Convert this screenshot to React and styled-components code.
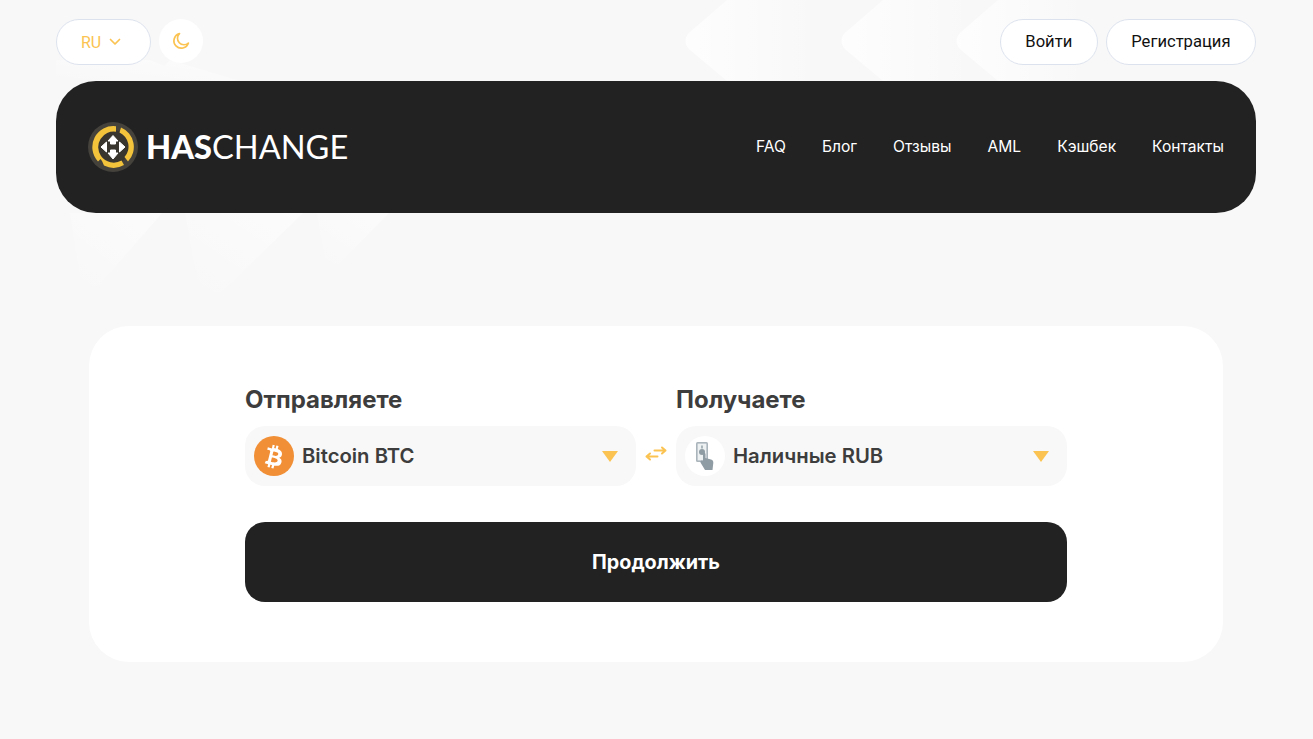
import React from "react";
import styled, { createGlobalStyle } from "styled-components";

const Global = createGlobalStyle`
  html, body { margin: 0; padding: 0; background: #f8f8f8; }
  body { font-family: Inter, Roboto, "Liberation Sans", sans-serif; overflow: hidden; }
  * { box-sizing: border-box; }
`;
const Page = styled.div`
  position: relative;
  height: 739px;
  padding: 19px 57px 0 56px;
  overflow: hidden;
`;
const Backdrop = styled.svg`
  position: absolute;
  left: 0;
  top: 0;
  width: 1313px;
  height: 320px;
  pointer-events: none;
`;
const Content = styled.div`
  position: relative;
`;
const TopBar = styled.div`
  display: flex;
  justify-content: space-between;
  height: 46px;
`;
const Group = styled.div`
  display: flex;
  gap: 8px;
`;
const PillButton = styled.button`
  height: 46px;
  padding: 0 24.5px 2px;
  border: 1px solid #dde3ee;
  border-radius: 23px;
  background: #fff;
  color: ${(p) => p.$color || "#111"};
  font: 400 16.6px Roboto, "Liberation Sans", sans-serif;
  display: flex;
  align-items: center;
  gap: 8px;
`;
const LangButton = styled(PillButton)`
  width: 95px;
  padding: 0 0 0 24px;
  font-size: 16px;
`;
const RoundButton = styled.button`
  width: 44px;
  height: 44px;
  border: 0;
  padding: 0;
  border-radius: 50%;
  background: #fff;
  display: flex;
  align-items: center;
  justify-content: center;
`;
const Header = styled.header`
  margin-top: 16px;
  height: 132px;
  background: #222;
  border-radius: 40px;
  padding: 0 32px;
  display: flex;
  align-items: center;
  justify-content: space-between;
`;
const Brand = styled.div`
  display: flex;
  align-items: center;
  gap: 7px;
`;
const Wordmark = styled.div`
  font: 400 32.6px Lato, "Open Sans", sans-serif;
  color: #fff;
  line-height: 1;
  margin-left: -1px;
  b { font-weight: 900; }
`;
const Nav = styled.nav`
  display: flex;
  gap: 36px;
  margin-top: -2px;
`;
const NavLink = styled.a`
  color: #fff;
  font: 400 15.6px Inter, Roboto, sans-serif;
`;
const Card = styled.main`
  margin: 113px 33px 0;
  height: 336px;
  background: #fff;
  border-radius: 40px;
  padding: 60px 156px 0;
`;
const Row = styled.div`
  display: grid;
  grid-template-columns: 391px 1fr 391px;
`;
const Field = styled.div``;
const Label = styled.div`
  font: 700 24px Inter, Roboto, sans-serif;
  color: #3d3d3d;
  height: 28px;
  line-height: 28px;
  margin-bottom: 12px;
`;
const Select = styled.div`
  height: 60px;
  background: #f8f8f8;
  border-radius: 20px;
  padding: 0 18px 0 9px;
  display: flex;
  align-items: center;
  gap: 8px;
`;
const CoinBadge = styled.div`
  width: 40px;
  height: 40px;
  border-radius: 50%;
  background: ${(p) => p.$bg};
  display: flex;
  align-items: center;
  justify-content: center;
  flex: none;
`;
const CoinName = styled.div`
  flex: 1;
  padding-bottom: 2px;
  font: 600 20.3px Inter, Roboto, sans-serif;
  color: #3d3d3d;
`;
const Caret = styled.div`
  width: 0;
  height: 0;
  border-left: 8px solid transparent;
  border-right: 8px solid transparent;
  border-top: 11px solid #fbc351;
`;
const SwapSlot = styled.div`
  padding-top: 36px;
  display: flex;
  align-items: center;
  justify-content: center;
`;
const Submit = styled.button`
  display: block;
  width: 100%;
  height: 80px;
  margin-top: 36px;
  border: 0;
  border-radius: 20px;
  background: #222;
  color: #fff;
  font: 700 19.8px Inter, Roboto, sans-serif;
`;

function Chevron({ x }) {
  return (
    <path
      transform={`translate(${x} 0)`}
      fill="url(#fadeRight)"
      d="M8 32 C2 37 2 45 8 50 L45 81 L130 81 L130 0 L45 0 Z"
    />
  );
}
function Down({ x, w, h }) {
  return (
    <path
      transform={`translate(${x} 213)`}
      fill="url(#fadeDown)"
      d={`M0 0 L${w} 0 L${w * 0.32} ${h} C${w * 0.26} ${h + 3} ${w * 0.18} ${h + 3} ${w * 0.12} ${h} Z`}
    />
  );
}

function Logo() {
  return (
    <svg width="52" height="50" viewBox="0 0 52 50">
      <circle cx="25" cy="25" r="25" fill="#45423c" />
      <circle cx="25" cy="25" r="17" fill="#38352f" />
      <path d="M33 5.6 A21 21 0 0 1 40 39.5 L36.5 35 A15.5 15.5 0 0 0 31.5 10.5 Z" fill="#f3c33c" />
      <path d="M28 4.3 A21 21 0 0 0 10 39.5 L12.5 37 L14 39 L16 43.5 A21 21 0 0 0 36 43 L33.5 38.5 A15.5 15.5 0 0 1 13 34 A15.5 15.5 0 0 1 28 9.8 Z" fill="#f3c33c" />
      <g fill="#fff" stroke="#fff" strokeWidth="1" strokeLinejoin="round">
        <path d="M25 13.5 L30 19 H27.5 V22 H22.5 V19 H20 Z" />
        <path d="M25 37 L30 31 H27.5 V28 H22.5 V31 H20 Z" />
        <path d="M13 25 L18.5 20 V30 Z" />
        <path d="M37 25 L31.5 20 V30 Z" />
      </g>
    </svg>
  );
}
function Moon() {
  return (
    <svg width="18" height="18" viewBox="0 0 18 18" fill="none">
      <path d="M7.5 1.6 A7.4 7.4 0 1 0 16.4 11 A6.4 6.4 0 0 1 7.5 1.6 Z" stroke="#fbc351" strokeWidth="1.7" strokeLinejoin="round" />
    </svg>
  );
}
function ChevronDown() {
  return (
    <svg width="12" height="8" viewBox="0 0 12 8" fill="none">
      <path d="M1.5 1.5 L6 6 L10.5 1.5" stroke="#fbc351" strokeWidth="1.7" strokeLinecap="round" strokeLinejoin="round" />
    </svg>
  );
}
function Swap() {
  return (
    <svg width="22" height="16" viewBox="0 0 22 16" fill="none" stroke="#fbc351" strokeWidth="2" strokeLinecap="round" strokeLinejoin="round">
      <path d="M9.5 4.5 H20.5 M17 1.5 L20.5 4.5 L17 7.5 M12.5 10.5 H1.5 M5 7.5 L1.5 10.5 L5 13.5" />
    </svg>
  );
}
function BtcGlyph() {
  return (
    <svg width="25" height="27" viewBox="0 0 24 26" fill="#fff">
      <path fillRule="evenodd" d="M10.2 1.6 L12.3 2.1 L11.6 4.8 L13.1 5.2 L13.8 2.5 L15.9 3 L15.2 5.8 C18 6.9 19.6 8.6 19.2 11 C18.9 12.8 18 13.8 16.6 14.1 C18.5 15.1 19.3 16.8 18.6 19 C17.7 21.9 15.2 22.4 11.7 21.8 L11 24.6 L8.9 24.1 L9.6 21.3 L8 20.9 L7.3 23.7 L5.2 23.2 L5.9 20.4 L2.6 19.5 L3.7 17.1 C4.8 17.4 5.5 17.6 5.8 16.6 L7.9 8.2 C8 7.4 7.5 7 6.6 6.8 L5 6.4 L5.6 4.2 L9.5 5.2 Z M10.9 8.1 L10 11.9 C11.6 12.3 15.1 13.2 15.6 10.9 C16.2 8.6 12.5 8.5 10.9 8.1 Z M9.5 13.9 L8.5 18.1 C10.3 18.5 14.4 19.6 15 17.2 C15.5 14.8 11.3 14.3 9.5 13.9 Z" />
    </svg>
  );
}
function CashGlyph() {
  return (
    <svg width="22" height="30" viewBox="0 0 22 30">
      <rect x="2" y="1" width="12" height="20" rx="1.5" fill="#aab5bb" />
      <rect x="3.6" y="2.6" width="8.8" height="16.8" fill="#eef1f2" />
      <circle cx="8" cy="11" r="3" fill="#8f9ca3" />
      <rect x="7" y="4.5" width="2" height="3" fill="#aab5bb" />
      <path d="M9 13 C9 11.5 11.5 11.5 11.5 13 V17 L17 18.5 C19 19 19.5 20.5 19.3 22 L18.5 29 H11 L6.5 21.5 C6 20 7.5 19 9 20 Z" fill="#8f9ca3" />
    </svg>
  );
}

const navItems = ["FAQ", "Блог", "Отзывы", "AML", "Кэшбек", "Контакты"];

export default function App() {
  return (
    <Page>
      <Global />
      <Backdrop viewBox="0 0 1313 320">
        <defs>
          <linearGradient id="fadeRight" x1="0" x2="1" y1="0" y2="0">
            <stop offset="0" stopColor="#fff" stopOpacity="0.8" />
            <stop offset="1" stopColor="#fff" stopOpacity="0.03" />
          </linearGradient>
          <linearGradient id="fadeDown" x1="1" x2="0" y1="0" y2="1">
            <stop offset="0" stopColor="#fff" stopOpacity="0.55" />
            <stop offset="1" stopColor="#fff" stopOpacity="0" />
          </linearGradient>
        </defs>
        <Chevron x={682} />
        <Chevron x={838} />
        <Chevron x={953} />
        <Down x={70} w={92} h={72} />
        <Down x={185} w={118} h={78} />
        <Down x={317} w={72} h={50} />
        <path d="M56 81 L56 60 L150 60 L200 81 Z M170 60 L240 81 L150 81 Z" fill="url(#fadeDown)" />
      </Backdrop>
      <Content>
        <TopBar>
          <Group>
            <LangButton $color="#fbc351">RU <ChevronDown /></LangButton>
            <RoundButton><Moon /></RoundButton>
          </Group>
          <Group>
            <PillButton>Войти</PillButton>
            <PillButton>Регистрация</PillButton>
          </Group>
        </TopBar>
        <Header>
          <Brand>
            <Logo />
            <Wordmark><b>HAS</b>CHANGE</Wordmark>
          </Brand>
          <Nav>
            {navItems.map((n) => <NavLink key={n}>{n}</NavLink>)}
          </Nav>
        </Header>
        <Card>
          <Row>
            <Field>
              <Label>Отправляете</Label>
              <Select>
                <CoinBadge $bg="#f18f36"><BtcGlyph /></CoinBadge>
                <CoinName>Bitcoin BTC</CoinName>
                <Caret />
              </Select>
            </Field>
            <SwapSlot><Swap /></SwapSlot>
            <Field>
              <Label>Получаете</Label>
              <Select>
                <CoinBadge $bg="#fff"><CashGlyph /></CoinBadge>
                <CoinName>Наличные RUB</CoinName>
                <Caret />
              </Select>
            </Field>
          </Row>
          <Submit>Продолжить</Submit>
        </Card>
      </Content>
    </Page>
  );
}
